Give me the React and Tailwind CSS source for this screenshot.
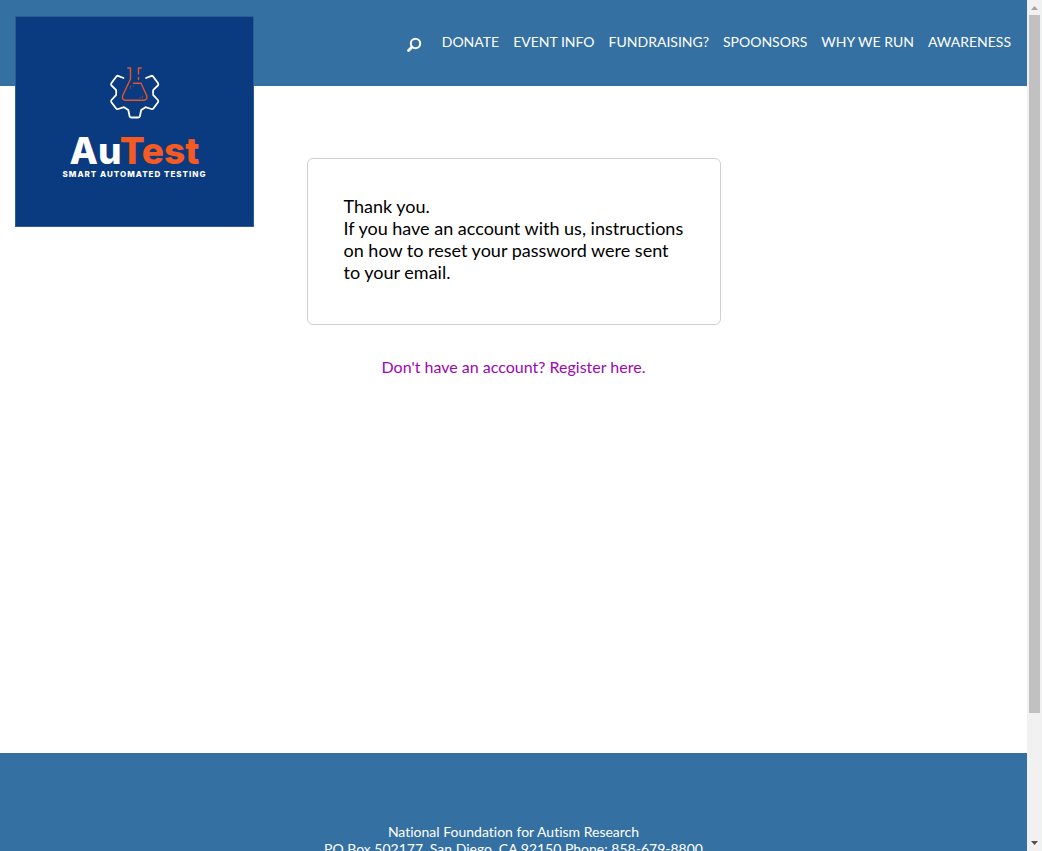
const navItems = [
  "DONATE",
  "EVENT INFO",
  "FUNDRAISING?",
  "SPOONSORS",
  "WHY WE RUN",
  "AWARENESS",
];

function Logo() {
  return (
    <a
      href="#"
      aria-label="AuTest home"
      className="absolute left-[15px] top-4 flex h-[211px] w-[239px] flex-col items-center border border-[#2f5a96] bg-[#0a3a7f] pt-[49px] font-['Inter',sans-serif]"
    >
      <svg width="52" height="54" viewBox="109 66 52 54" fill="none" strokeLinejoin="round" strokeLinecap="round" aria-hidden="true">
        <path
          d="M123.5 78 118 75.8Q116.8 75.6 116 77L111.3 83.3Q110.7 84.5 111.5 85.5L116 89.8Q116.6 92.5 116 95.2L111.5 100Q110.7 101 111.4 102.2L116 108.3Q117 109.3 118.2 109L124 107.2 128.3 110 129.6 116.2Q130 117.500 131.500 117.500H138Q139.500 117.500 139.900 116.200L141.200 110 145.500 107.200 151.300 109Q152.500 109.300 153.500 108.300L158 102.200Q158.700 101 157.900 100L153.300 95.200Q152.700 92.500 153.300 89.800L157.900 85.500Q158.700 84.500 158.100 83.300L153.500 77Q152.700 75.600 151.500 75.800L146 78"
          stroke="#fff"
          strokeWidth="1.800"
        />
        <g stroke="#e4552c" strokeWidth="1.400">
          <path d="M127.800 68H130.500V79L122.700 95.500Q121.600 100 125.500 100.200H143.500Q147.800 100 146.700 95.500L141 83.300H133.500" />
          <path d="M141.300 68H138.500V74M138.500 77.500V79.500" />
          <path d="M130.500 86V88.500M133 86H134M140 97.500H141M142.500 96V97.500" strokeWidth="0.700" opacity="0.700" />
        </g>
      </svg>
      <span className="mt-3 text-[37px] font-extrabold leading-[38px] text-white">
        Au<span className="text-[#f55a23]">Test</span>
      </span>
      <span className="whitespace-nowrap text-[8px] font-extrabold leading-[8px] tracking-[1px] text-white">
        SMART AUTOMATED TESTING
      </span>
    </a>
  );
}

function SearchIcon() {
  return (
    <svg width="16" height="16" viewBox="0 0 16 16" fill="none" stroke="#fff" aria-hidden="true">
      <circle cx="9.500" cy="6.500" r="4.700" strokeWidth="2" />
      <path d="M6 10 2.500 13.500" strokeWidth="2.800" strokeLinecap="round" />
    </svg>
  );
}

function Scrollbar() {
  return (
    <div className="flex w-[15px] shrink-0 flex-col items-center bg-[#f1f1f1]" aria-hidden="true">
      <svg width="15" height="15" viewBox="0 0 15 15" className="shrink-0">
        <path d="M4 10 7.500 6 11 10Z" fill="#a3a3a3" />
      </svg>
      <div className="min-h-0 w-full flex-1 px-[2px]">
        <div className="h-[85%] bg-[#c1c1c1]" />
      </div>
      <svg width="15" height="15" viewBox="0 0 15 15" className="shrink-0">
        <path d="M4 5 7.500 9 11 5Z" fill="#505050" />
      </svg>
    </div>
  );
}

export default function App() {
  return (
    <div className="flex h-screen bg-white font-['Lato',sans-serif] [font-variant-ligatures:none]">
      <div className="relative flex min-w-0 flex-1 flex-col overflow-hidden">
        <header className="flex h-[86px] shrink-0 justify-end bg-[#3470a2] pr-4 pt-8">
          <Logo />
          <nav className="flex h-5 items-center text-[14px] leading-5 text-white">
            <button type="button" aria-label="Search" className="mr-5 mt-[6px]">
              <SearchIcon />
            </button>
            <ul className="flex gap-[14px]">
              {navItems.map((item) => (
                <li key={item}>
                  <a href="#" className="whitespace-nowrap">{item}</a>
                </li>
              ))}
            </ul>
          </nav>
        </header>

        <main className="flex min-h-[667px] shrink-0 flex-col items-center pt-[72px]">
          <section className="w-full max-w-[414px] rounded-md border border-[#d0d0d0] px-9 pb-[41px] pt-9 text-[18px] leading-[22px] text-black">
            <p>Thank you.</p>
            <p>If you have an account with us, instructions on how to reset your password were sent to your email.</p>
          </section>
          <a href="#" className="mt-8 text-[16px] leading-5 text-[#9c06b3]">
            Don't have an account? Register here.
          </a>
        </main>

        <footer className="h-[250px] shrink-0 bg-[#3470a2] pt-[70px] text-center text-[14px] leading-[17px] text-white">
          <p>National Foundation for Autism Research</p>
          <p>PO Box 502177, San Diego, CA 92150 Phone: 858-679-8800</p>
        </footer>
      </div>
      <Scrollbar />
    </div>
  );
}
